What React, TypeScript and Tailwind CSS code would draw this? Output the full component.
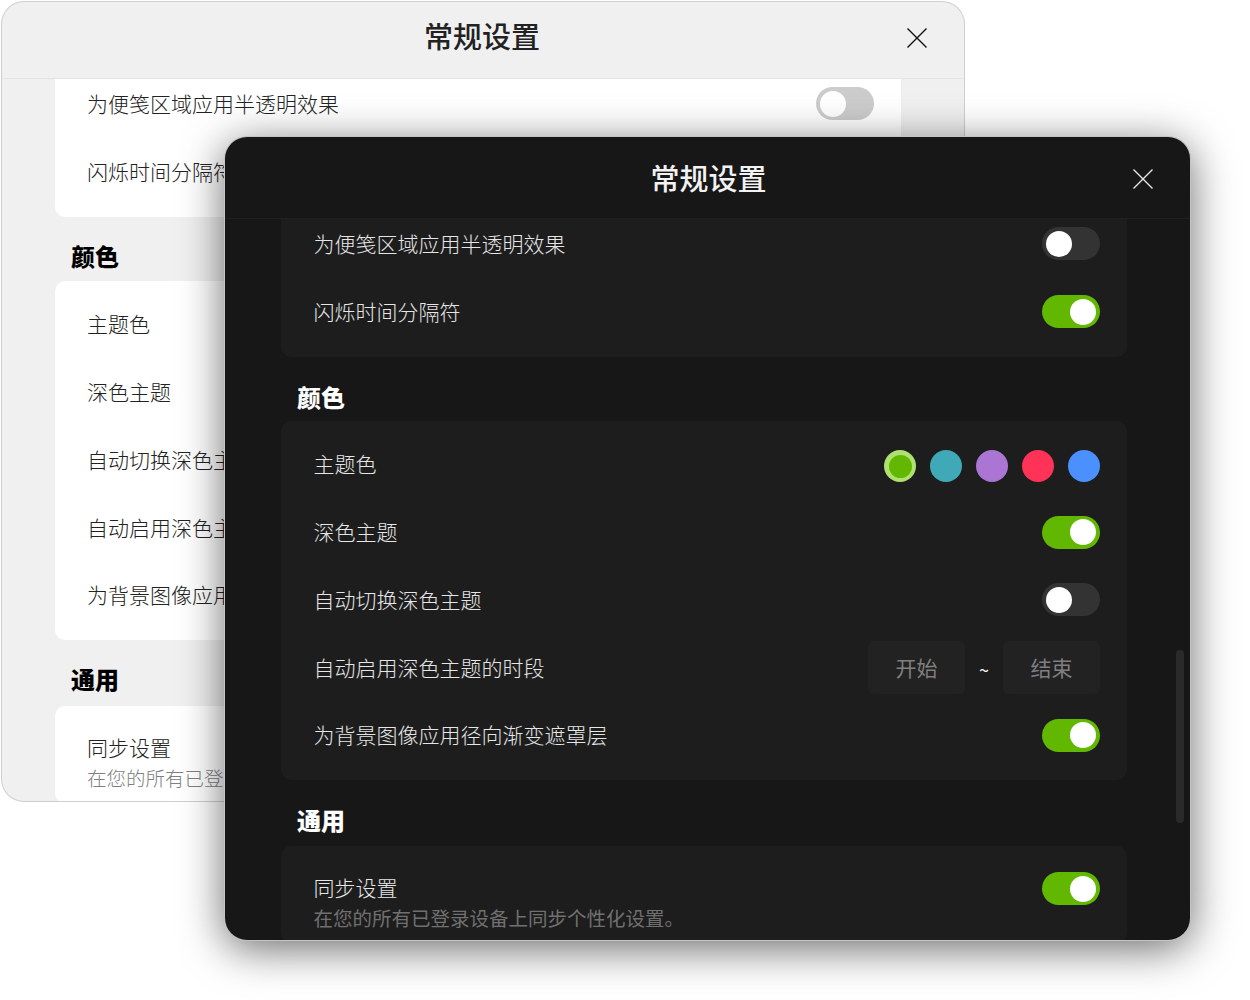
import React from "react";

const FONT = "font-['Noto_Sans_CJK_SC','Noto_Sans',sans-serif]";

function Toggle({ on, dark }: { on: boolean; dark: boolean }) {
  const track = on
    ? "bg-[#62b800] justify-end"
    : dark
      ? "bg-[#333333] justify-start"
      : "bg-[#cccccc] justify-start";
  return (
    <div className={`flex h-[33px] w-[58px] shrink-0 items-center rounded-full px-1 ${track}`}>
      <div className="h-[26px] w-[26px] rounded-full bg-white" />
    </div>
  );
}

function CloseIcon({ dark }: { dark: boolean }) {
  return (
    <svg width="20" height="20" viewBox="0 0 20 20" fill="none" className={dark ? "text-[#e4e4e4]" : "text-[#111111]"}>
      <path d="M0.5 0.5L19.5 19.5M19.5 0.5L0.5 19.5" stroke="currentColor" strokeWidth="1.4" />
    </svg>
  );
}

function Row({ label, dark, children }: { label: string; dark: boolean; children?: React.ReactNode }) {
  return (
    <div className={`flex h-[67.75px] items-center justify-between pr-[27px] ${dark ? "pl-[32.5px]" : "pl-[32px]"}`}>
      <span className={`text-[21px] leading-[30px] font-light ${dark ? "pb-[2px] text-[#e6e6e6]" : "pb-[2px] text-[#222222]"}`}>{label}</span>
      {children}
    </div>
  );
}

function Card({ dark, children }: { dark: boolean; children: React.ReactNode }) {
  return (
    <div className={`w-[846px] rounded-[10px] pt-[10px] pb-[11px] ${dark ? "bg-[#1d1d1d]" : "bg-white"}`}>
      {children}
    </div>
  );
}

function SectionTitle({ title, dark, className }: { title: string; dark: boolean; className: string }) {
  return (
    <h2 className={`pl-4 text-[24px] leading-[32px] font-black ${dark ? "pt-6 text-white" : "-mt-px mb-px pt-6 text-black"} ${className}`}>
      {title}
    </h2>
  );
}

function TimeField({ label }: { label: string }) {
  return (
    <div className="flex h-[53px] w-[97px] items-center justify-center rounded-md bg-[#222222] text-[21px] text-[#7f7f7f]">
      {label}
    </div>
  );
}

function SettingsWindow({ dark, className, headerClass, bodyClass }: { dark: boolean; className: string; headerClass: string; bodyClass: string }) {
  const swatches = ["bg-[#3fa9b8]", "bg-[#ab75d3]", "bg-[#ff3358]", "bg-[#4b90ff]"];

  return (
    <div className={`absolute flex flex-col overflow-hidden rounded-[22px] ${dark ? "bg-[#171717]" : "bg-[#f0f0f0]"} ${className}`}>
      <div className={`grid shrink-0 grid-cols-[1fr_auto_1fr] items-center border-b ${dark ? "border-[#1f1f1f]" : "border-[#e4e4e4]"} ${headerClass}`}>
        <div />
        <h1 className={`text-[29px] leading-10 font-medium ${dark ? "pb-[3px] pl-[2px] text-[#f2f2f2]" : "pb-[6px] pr-[2px] text-[#222222]"}`}>常规设置</h1>
        <div className="flex justify-end pr-[37px]">
          <CloseIcon dark={dark} />
        </div>
      </div>

      <div className={`min-h-0 flex-1 overflow-hidden ${bodyClass}`}>
        <div className="-mt-[19px]">
          <Card dark={dark}>
            <Row label="为便笺区域应用半透明效果" dark={dark}>
              <Toggle on={false} dark={dark} />
            </Row>
            <Row label="闪烁时间分隔符" dark={dark}>
              <Toggle on dark={dark} />
            </Row>
          </Card>

          <SectionTitle title="颜色" dark={dark} className="pb-2" />
          <Card dark={dark}>
            <Row label="主题色" dark={dark}>
              <div className="mt-[4px] flex items-center gap-[14px]">
                <div className="flex h-8 w-8 items-center justify-center rounded-full bg-[#afe070]">
                  <div className="h-[23px] w-[23px] rounded-full bg-[#62b800]" />
                </div>
                {swatches.map((swatch) => (
                  <div key={swatch} className={`h-8 w-8 rounded-full ${swatch}`} />
                ))}
              </div>
            </Row>
            <Row label="深色主题" dark={dark}>
              <Toggle on dark={dark} />
            </Row>
            <Row label="自动切换深色主题" dark={dark}>
              <Toggle on={false} dark={dark} />
            </Row>
            <Row label="自动启用深色主题的时段" dark={dark}>
              <div className="flex items-center">
                <TimeField label="开始" />
                <span className="w-[38px] pt-1 text-center text-[18px] text-white">~</span>
                <TimeField label="结束" />
              </div>
            </Row>
            <Row label="为背景图像应用径向渐变遮罩层" dark={dark}>
              <Toggle on dark={dark} />
            </Row>
          </Card>

          <SectionTitle title="通用" dark={dark} className="pb-[9.5px]" />
          <Card dark={dark}>
            <div className={`flex items-start justify-between pt-[16.5px] pr-[27px] ${dark ? "pl-[32.5px]" : "pl-[32px]"}`}>
              <div>
                <div className={`text-[21px] leading-[30px] font-light ${dark ? "text-[#e6e6e6]" : "text-[#222222]"}`}>同步设置</div>
                <div className={`mt-[2px] text-[19.5px] leading-[28px] ${dark ? "font-normal text-[#707070]" : "font-light text-[#808080]"}`}>
                  在您的所有已登录设备上同步个性化设置。
                </div>
              </div>
              <Toggle on dark={dark} />
            </div>
          </Card>
        </div>
      </div>

      {dark && <div className="absolute top-[513px] left-[951px] h-[173px] w-2 rounded bg-[#2a2a2a]" />}
    </div>
  );
}

export default function App() {
  return (
    <div className={`relative h-[1000px] w-[1250px] overflow-hidden bg-white ${FONT}`}>
      <SettingsWindow
        dark={false}
        className="top-[2px] left-[2px] h-[799px] w-[962px] shadow-[0_0_0_1px_#cfcfcf]"
        headerClass="h-[77px] pb-[4px]"
        bodyClass="pl-[53px]"
      />
      <SettingsWindow
        dark
        className="top-[137px] left-[225px] h-[803px] w-[965px] shadow-[0_0_0_1px_#c4c4c4,0_8px_44px_rgba(0,0,0,0.6)]"
        headerClass="h-[82px] pt-[2px]"
        bodyClass="pl-[56px]"
      />
    </div>
  );
}
